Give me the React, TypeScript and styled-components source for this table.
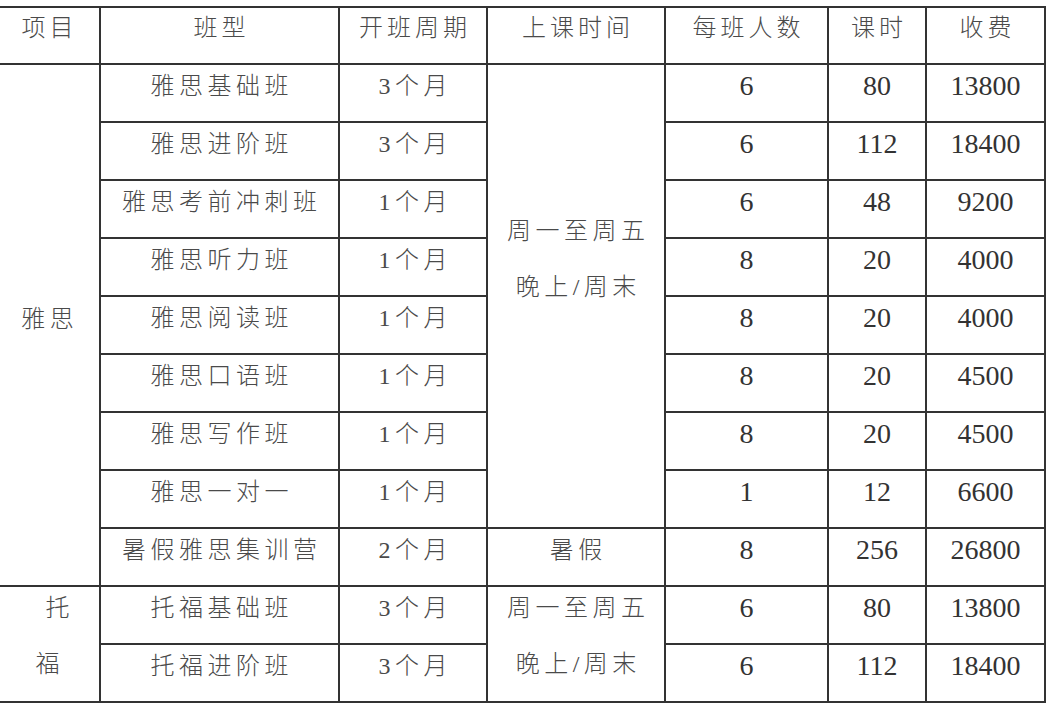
import React from 'react';
import styled, { createGlobalStyle } from 'styled-components';

interface Course {
  name: string;
  period: string;
  size: string;
  hours: string;
  fee: string;
}

const ieltsCourses: Course[] = [
  { name: '雅思基础班', period: '3个月', size: '6', hours: '80', fee: '13800' },
  { name: '雅思进阶班', period: '3个月', size: '6', hours: '112', fee: '18400' },
  { name: '雅思考前冲刺班', period: '1个月', size: '6', hours: '48', fee: '9200' },
  { name: '雅思听力班', period: '1个月', size: '8', hours: '20', fee: '4000' },
  { name: '雅思阅读班', period: '1个月', size: '8', hours: '20', fee: '4000' },
  { name: '雅思口语班', period: '1个月', size: '8', hours: '20', fee: '4500' },
  { name: '雅思写作班', period: '1个月', size: '8', hours: '20', fee: '4500' },
  { name: '雅思一对一', period: '1个月', size: '1', hours: '12', fee: '6600' },
];

const summerCamp: Course = { name: '暑假雅思集训营', period: '2个月', size: '8', hours: '256', fee: '26800' };

const toeflCourses: Course[] = [
  { name: '托福基础班', period: '3个月', size: '6', hours: '80', fee: '13800' },
  { name: '托福进阶班', period: '3个月', size: '6', hours: '112', fee: '18400' },
];

const headers = ['项目', '班型', '开班周期', '上课时间', '每班人数', '课时', '收费'];
const colWidths = [105, 239, 148, 178, 163, 98, 119];

const GlobalStyle = createGlobalStyle`
  html, body {
    margin: 0;
    padding: 0;
    background: #ffffff;
    overflow: hidden;
  }
`;

const Page = styled.div`
  width: 1064px;
  height: 728px;
  padding-top: 6px;
  box-sizing: border-box;
  overflow: hidden;
`;

const Table = styled.table`
  margin-left: -6px;
  width: 1050px;
  table-layout: fixed;
  border-collapse: collapse;
  font-family: "Liberation Serif", "Noto Sans CJK SC", serif;
  font-weight: 300;
  color: #4a4a4a;
`;

const HeadRow = styled.tr`
  height: 57px;
`;

const BodyRow = styled.tr`
  height: 58px;
`;

const HeadCell = styled.th`
  border: 2px solid #333;
  padding: 0;
  vertical-align: top;
  text-align: center;
  font-weight: 300;
  font-size: 24px;
  line-height: 40px;
  letter-spacing: 4px;
  text-indent: 4px;
`;

const Cell = styled.td<{ $valign?: 'top' | 'middle'; $padTop?: number; $padBottom?: number }>`
  border: 2px solid #333;
  padding: ${p => p.$padTop ?? 0}px 0 ${p => p.$padBottom ?? 0}px;
  vertical-align: ${p => p.$valign ?? 'top'};
  text-align: center;
  font-size: 24px;
  line-height: 42px;
  letter-spacing: 4.5px;
  text-indent: 4.5px;
  white-space: nowrap;
`;

const NumCell = styled(Cell)`
  font-size: 28px;
  font-weight: 400;
  letter-spacing: 0;
  text-indent: 0;
  color: #333;
`;

const Lines = styled.div`
  display: flex;
  flex-direction: column;
  align-items: center;
  gap: 14px;
`;

const Line = styled.span<{ $shift?: number }>`
  display: block;
  margin-left: ${p => p.$shift ?? 0}px;
`;

const CourseCells: React.FC<{ course: Course }> = ({ course }) => (
  <>
    <NumCell>{course.size}</NumCell>
    <NumCell>{course.hours}</NumCell>
    <NumCell>{course.fee}</NumCell>
  </>
);

const Schedule: React.FC = () => (
  <Lines>
    <Line>周一至周五</Line>
    <Line>晚上/周末</Line>
  </Lines>
);

const App: React.FC = () => {
  return (
    <Page>
      <GlobalStyle />
      <Table>
        <colgroup>
          {colWidths.map((w, i) => (
            <col key={i} style={{ width: w }} />
          ))}
        </colgroup>
        <thead>
          <HeadRow>
            {headers.map(h => (
              <HeadCell key={h}>{h}</HeadCell>
            ))}
          </HeadRow>
        </thead>
        <tbody>
          {ieltsCourses.map((c, i) => (
            <BodyRow key={c.name}>
              {i === 0 && (
                <Cell rowSpan={9} $valign="middle" $padBottom={12}>
                  雅思
                </Cell>
              )}
              <Cell>{c.name}</Cell>
              <Cell>{c.period}</Cell>
              {i === 0 && (
                <Cell rowSpan={8} $padTop={145}>
                  <Schedule />
                </Cell>
              )}
              <CourseCells course={c} />
            </BodyRow>
          ))}
          <BodyRow>
            <Cell>{summerCamp.name}</Cell>
            <Cell>{summerCamp.period}</Cell>
            <Cell>暑假</Cell>
            <CourseCells course={summerCamp} />
          </BodyRow>
          {toeflCourses.map((c, i) => (
            <BodyRow key={c.name}>
              {i === 0 && (
                <Cell rowSpan={2}>
                  <Lines>
                    <Line $shift={20}>托</Line>
                    <Line>福</Line>
                  </Lines>
                </Cell>
              )}
              <Cell>{c.name}</Cell>
              <Cell>{c.period}</Cell>
              {i === 0 && (
                <Cell rowSpan={2}>
                  <Schedule />
                </Cell>
              )}
              <CourseCells course={c} />
            </BodyRow>
          ))}
        </tbody>
      </Table>
    </Page>
  );
};

export default App;
